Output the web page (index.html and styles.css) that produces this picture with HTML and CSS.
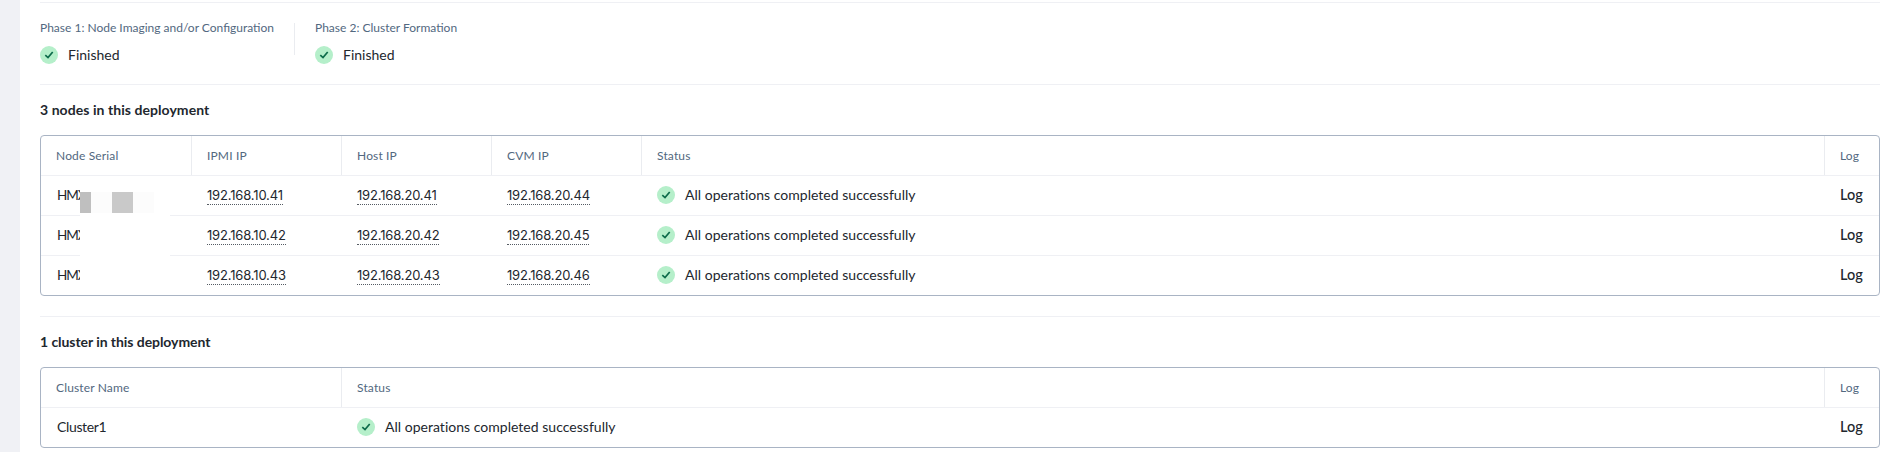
FILE: index.html
```html
<!DOCTYPE html>
<html lang="en">
<head>
<meta charset="utf-8">
<title>Deployment status</title>
<link rel="stylesheet" href="styles.css">
</head>
<body>
<svg width="0" height="0" class="defs">
  <symbol id="ok" viewBox="0 0 18 18"><circle cx="9" cy="9" r="9" fill="#b5efca"/><path d="M5.3 9.2 8 11.6 12.7 6" fill="none" stroke="#0c6b4a" stroke-width="1.7"/></symbol>
</svg>
<main class="panel">
  <section class="phases">
    <div class="phase phase-first">
      <div class="label">Phase 1: Node Imaging and/or Configuration</div>
      <div class="state"><svg class="icon"><use href="#ok"/></svg><span>Finished</span></div>
    </div>
    <div class="separator"></div>
    <div class="phase">
      <div class="label">Phase 2: Cluster Formation</div>
      <div class="state"><svg class="icon"><use href="#ok"/></svg><span>Finished</span></div>
    </div>
  </section>

  <section class="block nodes">
    <h2>3 nodes in this deployment</h2>
    <div class="table">
      <div class="row head"><div>Node Serial</div><div>IPMI IP</div><div>Host IP</div><div>CVM IP</div><div>Status</div><div>Log</div></div>
      <div class="row"><div class="name serial">HMX</div><div><span class="ip">192.168.10.41</span></div><div><span class="ip">192.168.20.41</span></div><div><span class="ip">192.168.20.44</span></div><div class="state"><svg class="icon"><use href="#ok"/></svg><span class="message">All operations completed successfully</span></div><div class="log">Log</div></div>
      <div class="row"><div class="name serial">HMX</div><div><span class="ip">192.168.10.42</span></div><div><span class="ip">192.168.20.42</span></div><div><span class="ip">192.168.20.45</span></div><div class="state"><svg class="icon"><use href="#ok"/></svg><span class="message">All operations completed successfully</span></div><div class="log">Log</div></div>
      <div class="row"><div class="name serial">HMX</div><div><span class="ip">192.168.10.43</span></div><div><span class="ip">192.168.20.43</span></div><div><span class="ip">192.168.20.46</span></div><div class="state"><svg class="icon"><use href="#ok"/></svg><span class="message">All operations completed successfully</span></div><div class="log">Log</div></div>
      <div class="mask"><i class="dark"></i><i class="pale"></i><i class="mid"></i><i class="pale"></i></div>
    </div>
  </section>

  <section class="block clusters">
    <h2>1 cluster in this deployment</h2>
    <div class="table">
      <div class="row head"><div>Cluster Name</div><div>Status</div><div>Log</div></div>
      <div class="row"><div class="name">Cluster1</div><div class="state"><svg class="icon"><use href="#ok"/></svg><span class="message">All operations completed successfully</span></div><div class="log">Log</div></div>
    </div>
  </section>
</main>
</body>
</html>
```
FILE: styles.css
```css
* { box-sizing: border-box; }
body {
  margin: 0;
  height: 452px;
  overflow: hidden;
  padding-left: 20px;
  background: #f0f1f5;
  color: #22272e;
  font: 14px/20px Lato, "Open Sans", sans-serif;
  white-space: nowrap;
}
.defs { position: absolute; }
.panel { height: 452px; padding: 2px 9px 0 20px; background: #fff; }
.phases {
  display: flex;
  height: 82px;
  padding-top: 15px;
  border-top: 1px solid #eff0f4;
}
.phase-first { width: 254px; }
.separator { width: 1px; height: 32px; margin: 5px 20px 0 0; background: #eaecf0; }
.label { height: 20px; font-size: 12px; color: #526880; }
.state { display: flex; align-items: center; gap: 10px; }
.phase .state { margin-top: 7px; height: 20px; }
.icon { width: 18px; height: 18px; flex: none; }
.block { border-top: 1px solid #eff0f4; }
.nodes { height: 232px; padding-top: 15px; }
.clusters { padding-top: 15px; }
h2 { margin: 0 0 15px; height: 20px; font-size: 14px; line-height: 20px; font-weight: 700; letter-spacing: .06px; }
.clusters h2 { letter-spacing: -.06px; }
.table { position: relative; width: 1840px; border: 1px solid #a9b4c4; border-radius: 4px; }
.row { display: grid; height: 40px; }
.row + .row { border-top: 1px solid #eff0f4; }
.nodes .row { grid-template-columns: 151px 150px 150px 150px 1fr 54px; }
.clusters .row { grid-template-columns: 301px 1fr 54px; }
.row > div { display: flex; align-items: center; padding: 0 0 1px 15px; }
.row.head { height: 39px; font-size: 12px; letter-spacing: .15px; color: #526880; }
.head > div { padding-bottom: 0; border-right: 1px solid #eaecf0; }
.head > div:last-child { border-right: 0; }
.row > .name { padding-left: 16px; letter-spacing: -.35px; }
.row > .serial { font-size: 13.5px; letter-spacing: -1.1px; }
.ip {
  height: 20px;
  border-bottom: 1px dotted #555b63;
  font-family: Inter, sans-serif;
  font-size: 13px;
  line-height: 20px;
  letter-spacing: -.17px;
}
.message { letter-spacing: .02px; }
.log { font-size: 14.5px; font-weight: 500; }
.mask {
  position: absolute;
  left: 39px;
  top: 50px;
  display: flex;
  width: 90px;
  height: 100px;
  padding-top: 6px;
  background: #fff;
}
.mask i { width: 21px; height: 21px; }
.mask .dark { width: 11px; background: #bfbfbf; }
.mask .pale { background: #fcfcfc; }
.mask .mid { background: #c9c9c9; }
```
